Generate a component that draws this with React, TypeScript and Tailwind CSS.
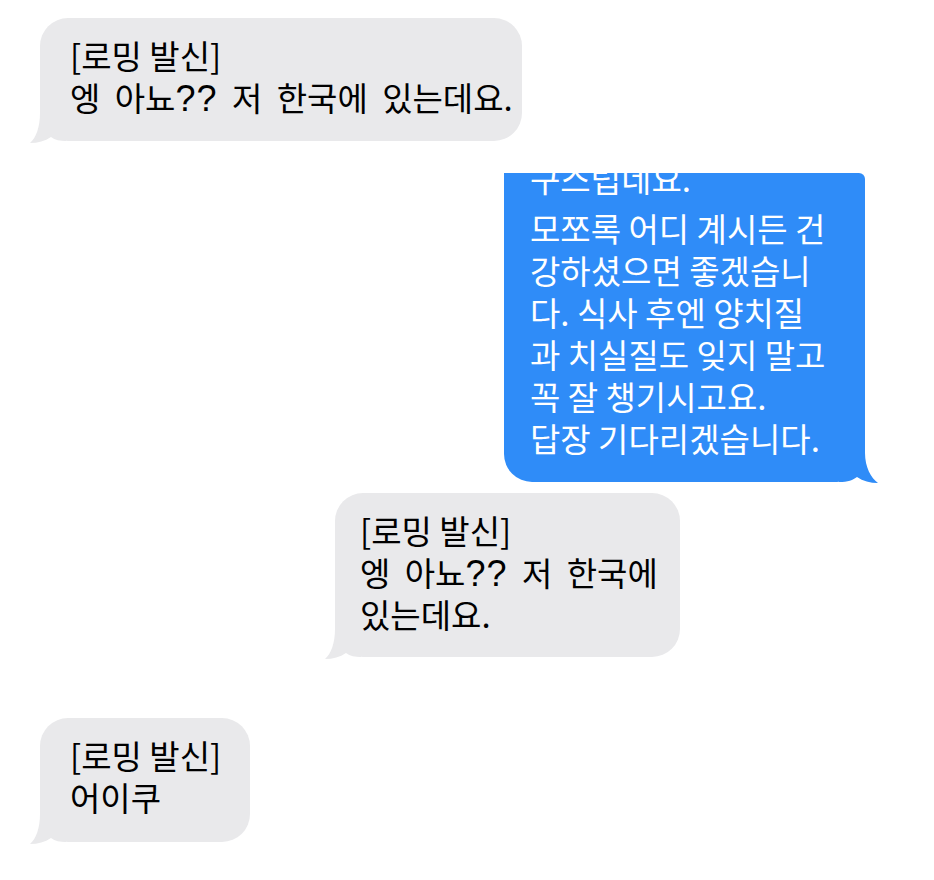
import React from "react";

const GRAY = "#e9e9eb";
const BLUE = "#2f8cf8";

function LeftTail() {
  return (
    <svg
      className="absolute left-[-10px] bottom-[-2px]"
      width="36"
      height="30"
      viewBox="0 0 36 30"
    >
      <path
        d="M10 0 C10 14 6 25 0 30 C8 30 15 28 21 24 C25 27 30 28 36 28 L36 0 Z"
        fill={GRAY}
      />
    </svg>
  );
}

function RightTail() {
  return (
    <svg
      className="absolute right-[-13px] bottom-[-1px]"
      width="39"
      height="30"
      viewBox="0 0 39 30"
    >
      <path
        d="M26 0 C26 14 32 25 39 30 C31 30 24 28 18 24 C14 27 9 29 0 29 L0 0 Z"
        fill={BLUE}
      />
    </svg>
  );
}

function Line({ children, className = "" }: { children: React.ReactNode; className?: string }) {
  return <div className={`whitespace-nowrap ${className}`}>{children}</div>;
}

function Ask() {
  // the system font draws its question marks larger than the Hangul face
  return (
    <span
      className="text-[36px] leading-none tracking-[1px]"
      style={{ fontFamily: '"Liberation Sans", Arial, sans-serif' }}
    >
      ??
    </span>
  );
}

export default function App() {
  return (
    <div
      className="w-[934px] h-[880px] bg-white flex flex-col text-[33px] leading-[42px] overflow-hidden"
      style={{ fontFamily: '"Noto Sans CJK KR", "Noto Sans", sans-serif' }}
    >
      {/* incoming */}
      <div className="flex pt-[18px] pl-[40px]">
        <div className="relative w-[482px] rounded-[28px] bg-[#e9e9eb] pl-[30px] pt-[16px] pb-[23px] text-black">
          <Line>[로밍 발신]</Line>
          <Line className="[word-spacing:7px]">
            엥 아뇨<Ask /> 저 한국에 있는데요.
          </Line>
          <LeftTail />
        </div>
      </div>

      {/* outgoing, scrolled so its first line is clipped */}
      <div className="flex justify-end pt-[32px] pr-[69px]">
        <div className="relative w-[361px] h-[309px] rounded-tr-[6px] rounded-bl-[28px] rounded-br-[28px] bg-[#2f8cf8] text-white">
          <div className="h-full overflow-hidden rounded-tr-[6px] rounded-bl-[28px] pl-[26px]">
            <Line className="mt-[-16px] mb-[8px]">구스럽네요.</Line>
            <Line>모쪼록 어디 계시든 건</Line>
            <Line>강하셨으면 좋겠습니</Line>
            <Line>다. 식사 후엔 양치질</Line>
            <Line>과 치실질도 잊지 말고</Line>
            <Line>꼭 잘 챙기시고요.</Line>
            <Line>답장 기다리겠습니다.</Line>
          </div>
          <RightTail />
        </div>
      </div>

      {/* incoming */}
      <div className="flex pt-[11px] pl-[335px]">
        <div className="relative w-[345px] rounded-[28px] bg-[#e9e9eb] pl-[25px] pt-[16px] pb-[22px] text-black">
          <Line>[로밍 발신]</Line>
          <Line className="[word-spacing:7px]">
            엥 아뇨<Ask /> 저 한국에
          </Line>
          <Line>있는데요.</Line>
          <LeftTail />
        </div>
      </div>

      {/* incoming */}
      <div className="flex pt-[61px] pl-[40px]">
        <div className="relative w-[210px] rounded-[28px] bg-[#e9e9eb] pl-[30px] pt-[16px] pb-[24px] text-black">
          <Line>[로밍 발신]</Line>
          <Line>어이쿠</Line>
          <LeftTail />
        </div>
      </div>
    </div>
  );
}
